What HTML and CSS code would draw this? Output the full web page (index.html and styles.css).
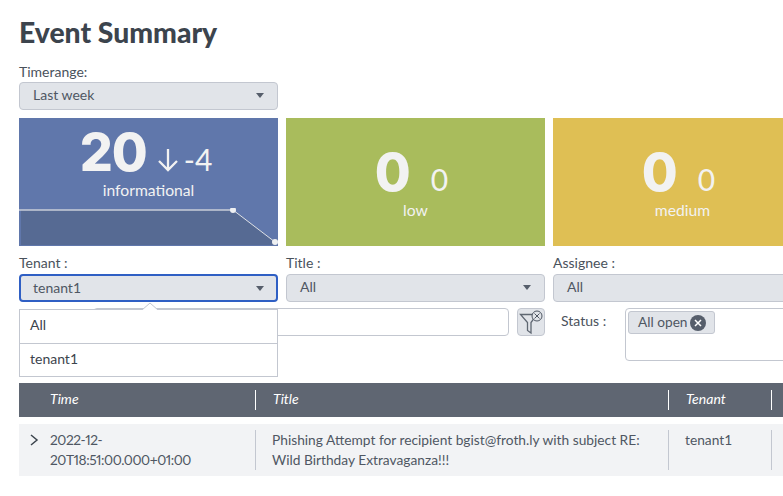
FILE: index.html
```html
<!DOCTYPE html>
<html lang="en">
<head>
<meta charset="utf-8">
<title>Event Summary</title>
<link rel="stylesheet" href="styles.css">
</head>
<body>
<main class="page">
  <h1 class="title">Event Summary</h1>
  <div class="timerange">
    <label class="label">Timerange:</label>
    <div class="select"><span>Last week</span><i class="caret"></i></div>
  </div>
  <section class="grid panels">
    <div class="panel blue">
      <div class="value shifted"><b>20</b><svg class="arrow" width="22" height="26" viewBox="0 0 22 26"><path d="M11 2V23M2 14l9 9 9-9" fill="none" stroke="#f2f2f2" stroke-width="2.300"/></svg><span class="delta">-4</span></div>
      <div class="name">informational</div>
      <svg class="spark" width="259" height="38" viewBox="0 0 259 38">
        <path d="M2 2H214L256 34V37H2Z" fill="#566a93"/>
        <path d="M0 2H214" fill="none" stroke="#c9ced8" stroke-width="1.6"/>
        <path d="M214 2L256 34" fill="none" stroke="#dfe2e6" stroke-width="1"/>
        <circle cx="214" cy="2" r="3" fill="#eef0f2"/>
        <circle cx="256" cy="34" r="3" fill="#eef0f2"/>
      </svg>
    </div>
    <div class="panel green">
      <div class="value zero"><b>0</b><span class="delta">0</span></div>
      <div class="name">low</div>
    </div>
    <div class="panel yellow">
      <div class="value zero"><b>0</b><span class="delta">0</span></div>
      <div class="name">medium</div>
    </div>
  </section>
  <section class="grid filters">
    <div>
      <label class="label">Tenant :</label>
      <div class="select focus"><span>tenant1</span><i class="caret"></i></div>
    </div>
    <div>
      <label class="label">Title :</label>
      <div class="select"><span>All</span><i class="caret"></i></div>
    </div>
    <div>
      <label class="label">Assignee :</label>
      <div class="select"><span>All</span><i class="caret"></i></div>
    </div>
  </section>
  <section class="grid second">
    <div class="search">
      <div class="input"></div>
      <button class="clear" type="button" aria-label="Clear filter">
        <svg width="26" height="26" viewBox="0 0 26 26">
          <path d="M2.500 5.500H19L13 13.500V24L9.500 21.500V13.500Z" fill="none" stroke="#5f6772" stroke-width="1.300"/>
          <circle cx="19" cy="7" r="5" fill="#e1e4e9" stroke="#4f5763" stroke-width="1"/>
          <path d="M16.500 4.500L21.500 9.500M21.500 4.500L16.500 9.500" stroke="#4f5763" stroke-width="1"/>
        </svg>
      </button>
    </div>
    <div class="status">
      <label class="label status-label">Status :</label>
      <div class="multi">
        <span class="chip">All open<i class="chip-x"><svg width="16" height="16" viewBox="0 0 16 16"><circle cx="8" cy="8" r="8" fill="#565e6b"/><path d="M5 5L11 11M11 5L5 11" stroke="#fff" stroke-width="1.500"/></svg></i></span>
      </div>
    </div>
    <div class="menu">
      <svg class="notch" width="20" height="8" viewBox="0 0 20 8"><path d="M0 8L8 1 16 8" fill="#fff" stroke="#c3c7d0"/></svg>
      <div class="option">All</div>
      <div class="option">tenant1</div>
    </div>
  </section>
  <section class="table">
    <div class="thead">
      <div class="th time">Time</div>
      <div class="th ttl">Title</div>
      <div class="th tnt">Tenant</div>
      <div class="th"></div>
    </div>
    <div class="tr">
      <div class="td time"><svg class="expand" width="10" height="14" viewBox="0 0 10 14"><path d="M2 2L8 7 2 12" fill="none" stroke="#3c444d" stroke-width="1.500"/></svg><span class="stamp">2022-12-<br>20T18:51:00.000+01:00</span></div>
      <div class="td ttl">Phishing Attempt for recipient bgist@froth.ly with subject RE: Wild Birthday Extravaganza!!!</div>
      <div class="td tnt">tenant1</div>
      <div class="td"></div>
    </div>
  </section>
</main>
</body>
</html>
```
FILE: styles.css
```css
* { box-sizing: border-box; }
html, body { margin: 0; height: 100%; overflow: hidden; background: #fff; }
body { font-family: Lato, "Open Sans", sans-serif; color: #3c444d; font-size: 14px; }
.page { width: 1100px; padding: 14px 0 0 19px; }
.title { margin: 0; height: 36px; font-size: 28.300px; line-height: 36px; font-weight: 900; color: #3c444d; }
.timerange { margin-top: 14px; width: 259px; }
.label { display: block; height: 18px; font-size: 14px; line-height: 15px; color: #4a525c; }
.filters .label { line-height: 13px; }
.select { display: flex; align-items: center; justify-content: space-between; height: 28px; padding: 0 13px 3px; background: #e1e4e9; border: 1px solid #c3c7d0; border-radius: 4px; color: #4f5763; }
.select.focus { border: 2px solid #2f5fc4; padding: 0 12px 2px; }
.caret { width: 0; height: 0; margin-top: 2px; border: 4.500px solid transparent; border-top: 5px solid #565e6b; border-bottom: 0; }
.grid { display: grid; grid-template-columns: 259px 259px 259px; gap: 8px; }
.panels { margin-top: 8px; }
.panel { display: flex; flex-direction: column; align-items: center; height: 128px; color: #f2f2f2; overflow: hidden; }
.blue { background: #6077ab; }
.green { background: #a9bc5c; }
.yellow { background: #dfbf54; }
.value { display: flex; align-items: baseline; height: 50px; margin-top: 10px; }
.shifted { margin-left: -5px; }
.value b { font-family: Inter, Lato, sans-serif; font-size: 52px; line-height: 50px; font-weight: 800; letter-spacing: -1px; }
.value .delta { font-size: 30px; line-height: 50px; font-weight: 400; }
.arrow { margin: 0 5px 5px 10px; align-self: flex-end; }
.zero { margin-top: 37px; margin-left: -8px; height: 36px; }
.zero b { line-height: 36px; }
.zero .delta { margin-left: 21px; line-height: 36px; font-size: 30px; }
.name { font-size: 15.700px; line-height: 20px; margin-top: 2px; }
.zero + .name { margin-top: 9px; }
.spark { margin-top: auto; margin-bottom: 0; display: block; flex: none; }
.filters { margin-top: 10px; }
.second { position: relative; margin-top: 6px; height: 75px; }
.search { grid-column: 1 / span 2; display: flex; gap: 8px; padding-left: 74px; }
.input { flex: 1; height: 28px; background: #fff; border: 1px solid #c3c7d0; border-radius: 4px; }
.clear { width: 28px; height: 28px; padding: 0; display: flex; align-items: center; justify-content: center; background: #e1e4e9; border: 1px solid #c3c7d0; border-radius: 4px; }
.status { display: flex; padding-left: 8px; }
.status-label { width: 64px; margin-top: 5px; }
.multi { flex: 1; height: 53px; padding: 2px; border: 1px solid #c3c7d0; border-radius: 4px; background: #fff; }
.chip { display: inline-flex; align-items: center; justify-content: space-between; white-space: nowrap; width: 87px; height: 23px; padding: 0 8px 2px 9px; background: #e1e4e9; border: 1px solid #c3c7d0; border-radius: 3px; color: #4f5763; font-size: 13.700px; }
.chip-x { display: flex; margin-top: 2px; font-style: normal; }
.menu { position: absolute; left: 0; top: 1px; width: 259px; height: 68px; background: #fff; border: 1px solid #c3c7d0; }
.notch { position: absolute; left: 122px; top: -8px; }
.option { height: 33px; padding-left: 10px; line-height: 30px; font-size: 14px; color: #3c444d; }
.option + .option { border-top: 1px solid #c3c7d0; height: 34px; }
.thead, .tr { display: grid; grid-template-columns: 237px 413px 103px 1fr; }
.thead { height: 34px; align-items: center; background: #5f6672; color: #fff; font-style: italic; font-size: 14px; }
.th { height: 20px; line-height: 18px; border-right: 1px solid #fff; padding-left: 17px; }
.th.time { padding-left: 31px; }
.tr { height: 52px; margin-top: 7px; background: #f2f3f5; align-items: center; color: #4f5763; font-size: 13.750px; line-height: 20px; }
.td { height: 40px; border-right: 1px solid #c3c7d0; padding-left: 16px; }
.td.time { display: flex; padding-left: 10px; }
.td.ttl { padding-right: 16px; }
.expand { margin: 3px 11px 0 0; flex: none; }
.stamp { letter-spacing: -0.450px; font-variant-numeric: proportional-nums; }
```
